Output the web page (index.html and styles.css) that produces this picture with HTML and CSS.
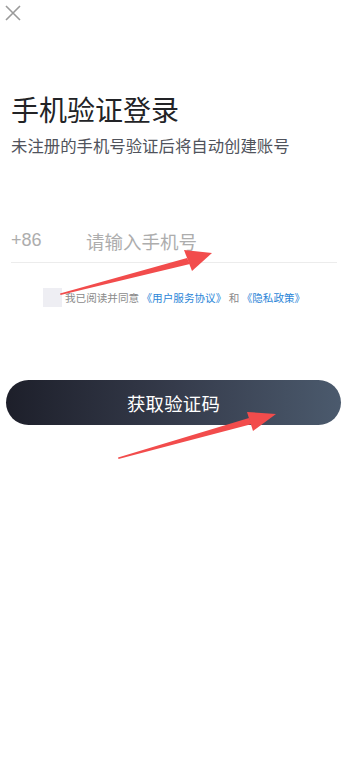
FILE: index.html
```html
<!DOCTYPE html>
<html lang="zh">
<head>
<meta charset="utf-8">
<link rel="stylesheet" href="styles.css">
</head>
<body>
<div class="page">
  <div class="close">
    <svg width="16" height="16" viewBox="0 0 16 16"><path d="M1 1L15 15M15 1L1 15" stroke="#9a9a9a" stroke-width="1.6" fill="none"/></svg>
  </div>
  <h1 class="title">手机验证登录</h1>
  <p class="subtitle">未注册的手机号验证后将自动创建账号</p>
  <div class="phone-row">
    <span class="code">+86</span>
    <span class="placeholder">请输入手机号</span>
  </div>
  <div class="agree">
    <span class="check"></span>
    <span class="agree-text">我已阅读并同意 <span class="link">《用户服务协议》</span> 和 <span class="link">《隐私政策》</span></span>
  </div>
  <div class="btn">获取验证码</div>
</div>
<svg class="arrows" width="349" height="758" viewBox="0 0 349 758">
  <polygon points="60,293.5 187,258 190,264 60.5,295" fill="#f24c4c"/>
  <polygon points="212,253 184,250 192,271" fill="#f24c4c"/>
  <polygon points="118,457.5 249,418 252,424 118.5,459" fill="#f24c4c"/>
  <polygon points="276,414 247,412 253,431" fill="#f24c4c"/>
</svg>
</body>
</html>
```
FILE: styles.css
```css
html, body {
  margin: 0;
  padding: 0;
  background: #ffffff;
}
body {
  font-family: "Noto Sans CJK SC", "Noto Sans", sans-serif;
  width: 349px;
  height: 758px;
  position: relative;
  overflow: hidden;
}
.page {
  display: flex;
  flex-direction: column;
}
.close {
  padding: 5px 0 0 5px;
  height: 16px;
}
.close svg { display: block; }
.title {
  margin: 68px 0 0 11px;
  font-size: 28px;
  line-height: 40px;
  font-weight: 400;
  color: #222326;
}
.subtitle {
  margin: 4px 0 0 11px;
  font-size: 16.4px;
  line-height: 24px;
  color: #50535c;
}
.phone-row {
  margin: 62px 12px 0 11px;
  height: 43px;
  display: flex;
  align-items: center;
  border-bottom: 1px solid #ececec;
  font-size: 18.5px;
  color: #adadad;
}
.code {
  font-family: "Liberation Sans", "Noto Sans", sans-serif;
  font-size: 18px;
  width: 75px;
}
.agree {
  margin: 25px 0 0 43px;
  display: flex;
  align-items: center;
  gap: 3px;
}
.check {
  width: 19px;
  height: 19px;
  background: #eeeef3;
}
.agree-text {
  font-size: 10.6px;
  color: #8a8a8a;
  white-space: nowrap;
}
.link {
  color: #2b86d8;
}
.btn {
  margin: 73px 8px 0 6px;
  height: 45px;
  border-radius: 23px;
  background: linear-gradient(90deg, #1d1f2a 0%, #353b4b 50%, #4b5a6d 100%);
  color: #ffffff;
  font-size: 18.4px;
  display: flex;
  align-items: center;
  justify-content: center;
  letter-spacing: 0.2px;
}
.arrows {
  position: absolute;
  left: 0;
  top: 0;
  pointer-events: none;
}
```
